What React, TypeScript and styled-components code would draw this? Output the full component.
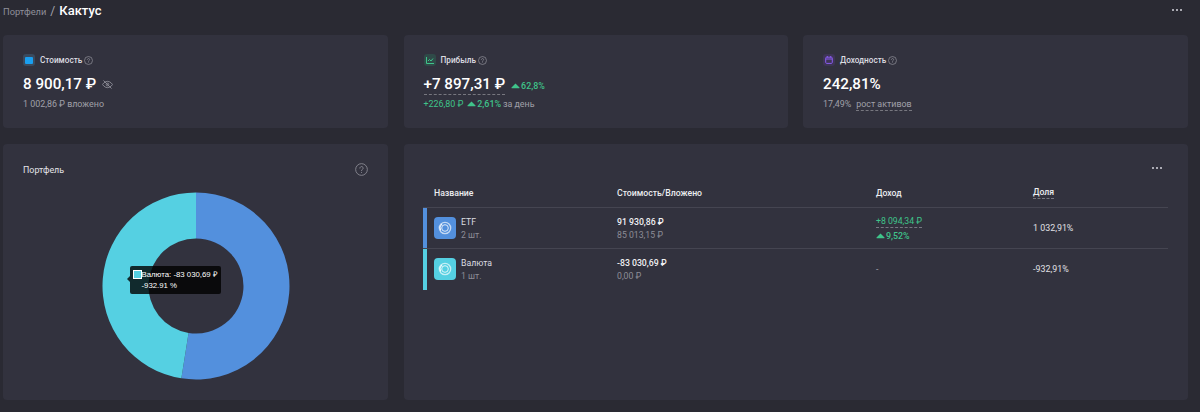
import React from "react";
import styled, { createGlobalStyle } from "styled-components";

const Global = createGlobalStyle`
  html, body { margin: 0; padding: 0; background: #2a2a33; }
  body { font-family: Roboto, "Noto Sans", sans-serif; color: #fff; overflow: hidden; }
  * { box-sizing: border-box; }
`;

const Page = styled.div`
  width: 1200px;
  height: 412px;
  padding: 0 12px 0 3px;
  display: flex;
  flex-direction: column;
`;

const Header = styled.header`
  height: 35px;
  display: flex;
  justify-content: space-between;
  align-items: flex-start;
`;

const Crumbs = styled.div`
  display: flex;
  align-items: baseline;
  gap: 4px;
  height: 21px;
  line-height: 21px;
`;
const CrumbLink = styled.span`
  font-size: 9.3px;
  color: #8f8f9a;
`;
const CrumbSep = styled.span`
  font-size: 12px;
  color: #a5a5ae;
`;
const CrumbTitle = styled.span`
  font-size: 13px;
  font-weight: 500;
  color: #fff;
`;

const Dots = styled.div<{ $top: number }>`
  display: flex;
  gap: 2px;
  padding-top: ${(p) => p.$top}px;
  margin-right: 6px;
  & > i {
    width: 2px;
    height: 2px;
    border-radius: 50%;
    background: #d5d5dc;
  }
`;

const Grid = styled.div`
  display: grid;
  grid-template-columns: 385px 384px 385px;
  grid-template-rows: 93px 256px;
  column-gap: 15.5px;
  row-gap: 16px;
`;

const Card = styled.section<{ $span?: number }>`
  background: #32323e;
  border-radius: 4px;
  grid-column: span ${(p) => p.$span ?? 1};
`;

const StatCard = styled(Card)`
  padding: 18px 20px 0;
`;

const StatHead = styled.div`
  display: flex;
  align-items: center;
  height: 14px;
  font-size: 8.2px;
  font-weight: 500;
  color: #dcdce1;
`;

const IconTile = styled.span<{ $bg: string }>`
  width: 12px;
  height: 12px;
  border-radius: 3px;
  background: ${(p) => p.$bg};
  display: inline-flex;
  align-items: center;
  justify-content: center;
  margin-right: 5px;
`;

const HelpIcon = styled.svg`
  width: 9px;
  height: 9px;
  margin-left: 2px;
`;

const Value = styled.div`
  margin-top: 6px;
  height: 22px;
  display: flex;
  align-items: center;
  font-size: 15.2px;
  font-weight: 500;
  line-height: 20px;
`;

const Dashed = styled.span`
  border-bottom: 1px dashed #77777f;
`;

const Sub = styled.div`
  margin-top: 2px;
  height: 14px;
  display: flex;
  align-items: center;
  font-size: 8.9px;
  line-height: 12px;
  color: #a0a0a9;
`;

const Green = styled.span`
  color: #3fc48a;
`;

const Delta = styled.span<{ $drop?: number }>`
  display: inline-flex;
  align-items: center;
  gap: 1px;
  color: #3fc48a;
  font-size: 8.9px;
  font-weight: 500;
  margin-top: ${(p) => p.$drop ?? 0}px;
`;

const SubGap = styled.span<{ $w: number }>`
  display: inline-block;
  width: ${(p) => p.$w}px;
`;

const ChartCard = styled(Card)`
  padding: 19px 20px 0;
  display: flex;
  flex-direction: column;
`;
const ChartHead = styled.div`
  display: flex;
  align-items: center;
  justify-content: space-between;
  height: 13px;
  font-size: 8.9px;
  color: #e4e4e8;
`;
const LargeHelp = styled.svg`
  width: 13px;
  height: 13px;
`;
const DonutWrap = styled.div`
  position: relative;
  margin: 16px auto 0;
  width: 188px;
  height: 188px;
`;
const Tip = styled.div`
  position: absolute;
  left: 28px;
  top: 74px;
  width: 91px;
  height: 28px;
  padding: 3px 3px 0 3px;
  background: rgba(0, 0, 0, 0.8);
  border-radius: 2px;
  font-family: "Liberation Sans", Arial, sans-serif;
  font-size: 7.8px;
  line-height: 11px;
  color: #fff;
  white-space: nowrap;
  &::before {
    content: "";
    position: absolute;
    left: -3px;
    top: 10px;
    border-style: solid;
    border-width: 3px 3px 3px 0;
    border-color: transparent rgba(0, 0, 0, 0.8) transparent transparent;
  }
`;
const TipLine = styled.div`
  display: flex;
  align-items: center;
  height: 11px;
`;
const TipLine2 = styled.div`
  padding-left: 9px;
`;
const TipSwatch = styled.i`
  display: inline-block;
  flex: none;
  width: 9px;
  height: 9px;
  background: #55d0e2;
  border: 1px solid #fff;
`;

const TableCard = styled(Card)`
  padding: 19px 20px 0 19.5px;
  display: flex;
  flex-direction: column;
`;
const TableTop = styled.div`
  display: flex;
  justify-content: flex-end;
  height: 7px;
`;
const TableRowGrid = styled.div`
  display: grid;
  grid-template-columns: 194px 259px 157px 1fr;
  align-items: center;
`;
const HeadRow = styled(TableRowGrid)`
  margin-top: 16px;
  height: 21px;
  font-size: 8.7px;
  font-weight: 500;
  color: #ecedf0;
  padding-bottom: 11px;
`;
const HeadName = styled.span`
  padding-left: 11px;
`;
const Row = styled(TableRowGrid)<{ $color: string }>`
  height: 41px;
  border-top: 1px solid #454551;
  position: relative;
  &::before {
    content: "";
    position: absolute;
    left: 0;
    top: 0;
    bottom: -1px;
    width: 4px;
    background: ${(p) => p.$color};
  }
`;
const HeadDashed = styled.span`
  justify-self: start;
  border-bottom: 1px dashed #777781;
  line-height: 12px;
`;
const NameCell = styled.div`
  display: flex;
  align-items: center;
  padding-left: 11px;
  gap: 5px;
`;
const AssetIcon = styled.span<{ $bg: string }>`
  width: 22px;
  height: 22px;
  border-radius: 4px;
  background: ${(p) => p.$bg};
  display: inline-flex;
  align-items: center;
  justify-content: center;
`;
const Stack = styled.div`
  display: flex;
  flex-direction: column;
  gap: 1.5px;
  padding-top: 1px;
  font-size: 8.7px;
  line-height: 12px;
`;
const Primary = styled.span`
  color: #dcdce1;
`;
const Strong = styled.span`
  color: #f0f0f3;
  font-weight: 500;
`;
const Muted = styled.span`
  color: #8d8d97;
`;
const Share = styled.span`
  font-size: 8.9px;
  color: #e0e0e5;
`;
const Dash = styled.span`
  font-size: 8.9px;
  color: #a0a0a8;
`;
const DashedGreen = styled(Green)`
  align-self: flex-start;
  border-bottom: 1px dashed #777781;
`;

const Tri = () => (
  <svg width="9" height="6" viewBox="0 0 9 6" aria-hidden>
    <path d="M4.5.5 8.5 4.6c.2.3 0 .7-.3.7H.8c-.3 0-.5-.4-.3-.7z" fill="#3fc48a" />
  </svg>
);

const Help = () => (
  <HelpIcon viewBox="0 0 12 12" fill="none" aria-hidden>
    <circle cx="6" cy="6" r="5.3" stroke="#8d8d97" strokeWidth="1" />
    <path d="M4.5 4.7a1.5 1.5 0 1 1 2.3 1.3c-.5.3-.8.6-.8 1.1" stroke="#8d8d97" strokeWidth="1" strokeLinecap="round" />
    <circle cx="6" cy="8.8" r=".6" fill="#8d8d97" />
  </HelpIcon>
);

const Coin = () => (
  <svg width="14" height="14" viewBox="0 0 14 14" fill="none" aria-hidden>
    <circle cx="7" cy="7" r="5.7" stroke="rgba(255,255,255,.65)" strokeWidth="1.3" />
    <circle cx="7" cy="7" r="3.3" stroke="rgba(255,255,255,.8)" strokeWidth="1" />
    <path d="M2.6 9.5A5.2 5.2 0 0 1 4 3" stroke="#fff" strokeWidth="1" />
  </svg>
);

function arc(r0: number, r1: number, a0: number, a1: number, c = 94) {
  const pt = (r: number, a: number) => {
    const t = ((a - 90) * Math.PI) / 180;
    return `${(c + r * Math.cos(t)).toFixed(2)} ${(c + r * Math.sin(t)).toFixed(2)}`;
  };
  const large = a1 - a0 > 180 ? 1 : 0;
  return `M${pt(r1, a0)}A${r1} ${r1} 0 ${large} 1 ${pt(r1, a1)}L${pt(r0, a1)}A${r0} ${r0} 0 ${large} 0 ${pt(r0, a0)}Z`;
}

const DotsMenu = ({ top }: { top: number }) => (
  <Dots $top={top}>
    <i />
    <i />
    <i />
  </Dots>
);

export default function App() {
  return (
    <Page>
      <Global />
      <Header>
        <Crumbs>
          <CrumbLink>Портфели</CrumbLink>
          <CrumbSep>/</CrumbSep>
          <CrumbTitle>Кактус</CrumbTitle>
        </Crumbs>
        <DotsMenu top={9} />
      </Header>
      <Grid>
        <StatCard>
          <StatHead>
            <IconTile $bg="#3a4a5e">
              <svg width="8" height="7" viewBox="0 0 8 7" aria-hidden>
                <rect width="8" height="7" rx="1" fill="#1a9ff0" />
              </svg>
            </IconTile>
            Стоимость
            <Help />
          </StatHead>
          <Value>
            8 900,17 ₽
            <svg width="11" height="9" viewBox="0 0 24 20" fill="none" stroke="#8d8d97" strokeWidth="2" style={{ marginLeft: 6 }} aria-hidden>
              <path d="M1 10s4-7 11-7 11 7 11 7-4 7-11 7S1 10 1 10z" />
              <circle cx="12" cy="10" r="3" />
              <path d="M3 1l18 18" />
            </svg>
          </Value>
          <Sub>1 002,86 ₽ вложено</Sub>
        </StatCard>
        <StatCard>
          <StatHead>
            <IconTile $bg="#2f4a48">
              <svg width="8" height="7" viewBox="0 0 8 7" fill="none" stroke="#3fc48a" aria-hidden>
                <path d="M.5 0v6.5H8" />
                <path d="M2 4l1.5-1.5L5 4l2-2.5" />
              </svg>
            </IconTile>
            Прибыль
            <Help />
          </StatHead>
          <Value>
            <Dashed>+7 897,31 ₽</Dashed>
            <SubGap $w={6} />
            <Delta $drop={3}>
              <Tri />
              62,8%
            </Delta>
          </Value>
          <Sub>
            <Green>+226,80 ₽</Green>
            <SubGap $w={4} />
            <Delta>
              <Tri />
              2,61%
            </Delta>
            <SubGap $w={2} />
            за день
          </Sub>
        </StatCard>
        <StatCard>
          <StatHead>
            <IconTile $bg="#3e3555">
              <svg width="8" height="8" viewBox="0 0 8 8" fill="none" stroke="#8a5cf0" aria-hidden>
                <rect x=".7" y="1.2" width="6.6" height="6.2" rx="1" />
                <path d="M.7 3h6.6M2.3 0v1.5M5.7 0v1.5" />
              </svg>
            </IconTile>
            Доходность
            <Help />
          </StatHead>
          <Value>242,81%</Value>
          <Sub>
            17,49%
            <SubGap $w={5} />
            <Dashed>рост активов</Dashed>
          </Sub>
        </StatCard>
        <ChartCard>
          <ChartHead>
            Портфель
            <LargeHelp viewBox="0 0 12 12" fill="none" aria-hidden>
              <circle cx="6" cy="6" r="5.4" stroke="#8d8d97" strokeWidth=".8" />
              <path d="M4.5 4.7a1.5 1.5 0 1 1 2.3 1.3c-.5.3-.8.6-.8 1.1" stroke="#8d8d97" strokeWidth=".8" strokeLinecap="round" />
              <circle cx="6" cy="8.8" r=".5" fill="#8d8d97" />
            </LargeHelp>
          </ChartHead>
          <DonutWrap>
            <svg width="188" height="188" viewBox="0 0 188 188" aria-hidden>
              <path d={arc(47.5, 93.5, 0, 189)} fill="#5390dd" />
              <path d={arc(47.5, 93.5, 189, 360)} fill="#55d0e2" />
            </svg>
            <Tip>
              <TipLine>
                <TipSwatch />
                Валюта: -83 030,69 ₽
              </TipLine>
              <TipLine2>-932.91 %</TipLine2>
            </Tip>
          </DonutWrap>
        </ChartCard>
        <TableCard $span={2}>
          <TableTop>
            <DotsMenu top={4} />
          </TableTop>
          <HeadRow>
            <HeadName>Название</HeadName>
            <span>Стоимость/Вложено</span>
            <span>Доход</span>
            <HeadDashed>Доля</HeadDashed>
          </HeadRow>
          <Row $color="#5390dd">
            <NameCell>
              <AssetIcon $bg="#5390dd">
                <Coin />
              </AssetIcon>
              <Stack>
                <Primary>ETF</Primary>
                <Muted>2 шт.</Muted>
              </Stack>
            </NameCell>
            <Stack>
              <Strong>91 930,86 ₽</Strong>
              <Muted>85 013,15 ₽</Muted>
            </Stack>
            <Stack>
              <DashedGreen>+8 094,34 ₽</DashedGreen>
              <Delta>
                <Tri />
                9,52%
              </Delta>
            </Stack>
            <Share>1 032,91%</Share>
          </Row>
          <Row $color="#55d0e2">
            <NameCell>
              <AssetIcon $bg="#55d0e2">
                <Coin />
              </AssetIcon>
              <Stack>
                <Primary>Валюта</Primary>
                <Muted>1 шт.</Muted>
              </Stack>
            </NameCell>
            <Stack>
              <Strong>-83 030,69 ₽</Strong>
              <Muted>0,00 ₽</Muted>
            </Stack>
            <Dash>-</Dash>
            <Share>-932,91%</Share>
          </Row>
        </TableCard>
      </Grid>
    </Page>
  );
}
